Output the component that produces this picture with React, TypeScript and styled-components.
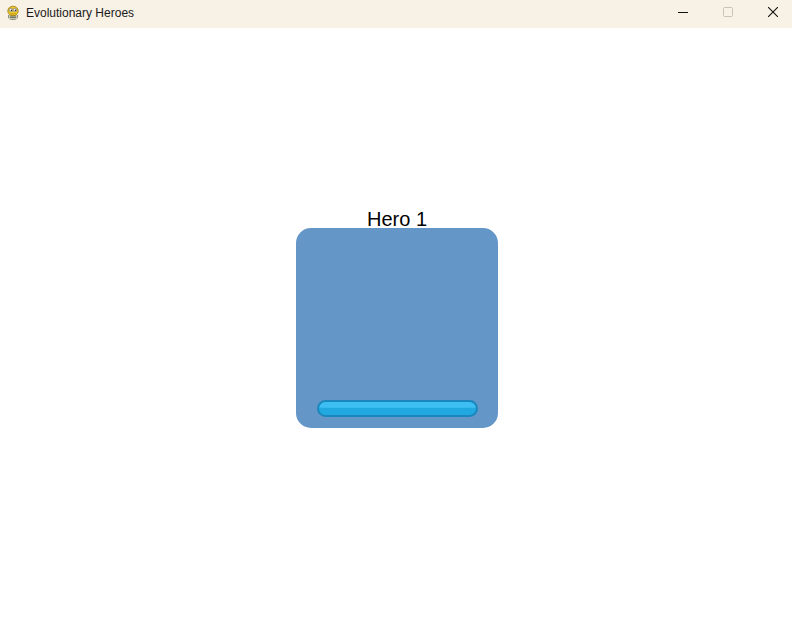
import React from "react";
import styled, { createGlobalStyle } from "styled-components";

const GlobalStyle = createGlobalStyle`
  html, body {
    margin: 0;
    padding: 0;
    background: #ffffff;
  }
  body {
    font-family: "Liberation Sans", Arial, sans-serif;
  }
`;

const Window = styled.div`
  width: 792px;
  height: 623px;
  display: flex;
  flex-direction: column;
  background: #ffffff;
  overflow: hidden;
`;

const TitleBar = styled.div`
  height: 28px;
  flex: 0 0 28px;
  background: #f8f1e5;
  display: flex;
  align-items: center;
  overflow: hidden;
`;

const AppIcon = styled.div`
  width: 16px;
  height: 16px;
  margin-left: 5px;
  margin-right: 5px;
  margin-top: -2px;
  display: flex;
`;

const Title = styled.span`
  font-family: "Liberation Sans", Arial, sans-serif;
  font-size: 12px;
  line-height: 14px;
  margin-top: -3px;
  color: #1a1a1a;
  flex: 1;
`;

const Controls = styled.div`
  display: flex;
  height: 28px;
  margin-right: -3px;
`;

const ControlButton = styled.div`
  width: 45px;
  height: 28px;
  display: flex;
  align-items: center;
  justify-content: center;
  padding-bottom: 4px;
  box-sizing: border-box;
`;

const Main = styled.main`
  flex: 1;
  display: flex;
  flex-direction: column;
  align-items: center;
  padding-top: 182px;
  padding-left: 2px;
`;

const HeroLabel = styled.div`
  font-family: "Liberation Sans", Arial, sans-serif;
  font-size: 20px;
  line-height: 18px;
  color: #000000;
`;

const HeroCard = styled.div`
  width: 202px;
  height: 200px;
  box-sizing: border-box;
  background: #6496c8;
  border-radius: 15px;
  display: flex;
  flex-direction: column;
  justify-content: flex-end;
  padding: 0 20px 11px 21px;
`;

const Bar = styled.div`
  height: 17px;
  box-sizing: border-box;
  border: 2px solid #1a88bd;
  border-radius: 9px;
  background: linear-gradient(
    to bottom,
    #3dbff4 0%,
    #3dbff4 40%,
    #22a8e0 50%,
    #22a8e0 100%
  );
`;

const PygameIcon = () => (
  <svg width="16" height="16" viewBox="0 0 16 16">
    <path d="M3 10 Q2 15 8 15 Q14 15 13 10 Z" fill="#8a8f78" />
    <rect x="4" y="10" width="8" height="4" fill="#c9c9b8" />
    <path d="M5 11 h6 M5 12.5 h6" stroke="#5a5f4a" strokeWidth="0.8" />
    <ellipse cx="8" cy="6" rx="5.2" ry="4.8" fill="#f2cc2a" stroke="#9a7a10" strokeWidth="0.8" />
    <circle cx="6" cy="5" r="1.8" fill="#ffffff" stroke="#555" strokeWidth="0.5" />
    <circle cx="10" cy="5" r="1.8" fill="#ffffff" stroke="#555" strokeWidth="0.5" />
    <circle cx="6.4" cy="5.2" r="0.8" fill="#222" />
    <circle cx="10.4" cy="5.2" r="0.8" fill="#222" />
    <path d="M5.5 8.5 Q8 10 10.5 8.5" stroke="#9a7a10" strokeWidth="0.7" fill="none" />
  </svg>
);

export default function App() {
  return (
    <>
      <GlobalStyle />
      <Window>
        <TitleBar>
          <AppIcon>
            <PygameIcon />
          </AppIcon>
          <Title>Evolutionary Heroes</Title>
          <Controls>
            <ControlButton>
              <svg width="10" height="10" viewBox="0 0 10 10">
                <path d="M0 5.5 H10" stroke="#111" strokeWidth="1" />
              </svg>
            </ControlButton>
            <ControlButton>
              <svg width="10" height="10" viewBox="0 0 10 10">
                <rect x="0.5" y="0.5" width="9" height="9" rx="1" fill="none" stroke="#c8c4bc" strokeWidth="1" />
              </svg>
            </ControlButton>
            <ControlButton>
              <svg width="10" height="10" viewBox="0 0 10 10">
                <path d="M0 0 L10 10 M10 0 L0 10" stroke="#111" strokeWidth="1.1" />
              </svg>
            </ControlButton>
          </Controls>
        </TitleBar>
        <Main>
          <HeroLabel>Hero 1</HeroLabel>
          <HeroCard>
            <Bar />
          </HeroCard>
        </Main>
      </Window>
    </>
  );
}
